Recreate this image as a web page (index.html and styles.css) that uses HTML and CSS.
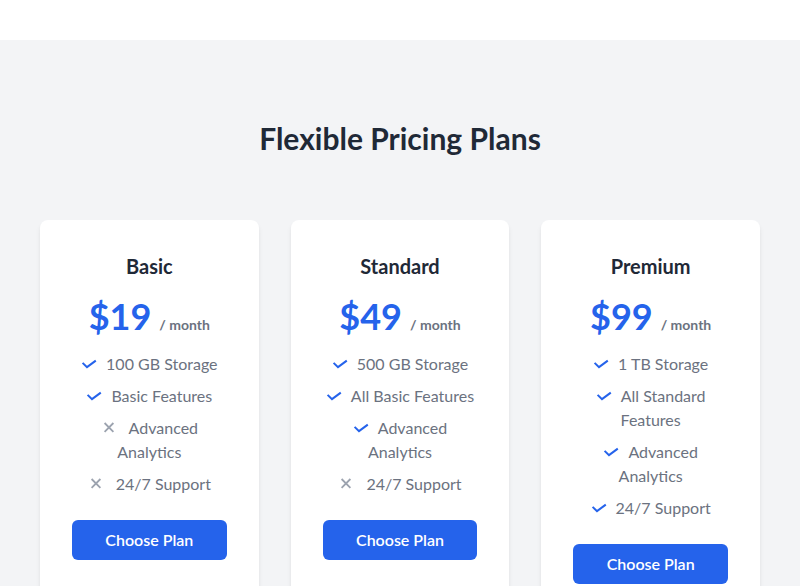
FILE: index.html
```html
<!DOCTYPE html>
<html lang="en">
<head>
<meta charset="utf-8">
<title>Pricing</title>
<link rel="stylesheet" href="styles.css">
</head>
<body>
<header class="topbar"></header>
<section class="pricing">
  <h2 class="pricing-title">Flexible Pricing Plans</h2>
  <div class="plans">
    <div class="card">
      <h3 class="plan-name">Basic</h3>
      <div class="price"><span class="amount">$19</span><span class="period">/ month</span></div>
      <ul class="features">
        <li><svg class="icon check" viewBox="0 0 16 16"><path d="M1.6 4.9L6 9.1L14.8 2.6"/></svg>100 GB Storage</li>
        <li><svg class="icon check" viewBox="0 0 16 16"><path d="M1.6 4.9L6 9.1L14.8 2.6"/></svg>Basic Features</li>
        <li><svg class="icon cross" viewBox="0 0 16 16"><path d="M3.6 1L12.4 9.8M12.4 1L3.6 9.8"/></svg>Advanced Analytics</li>
        <li><svg class="icon cross" viewBox="0 0 16 16"><path d="M3.6 1L12.4 9.8M12.4 1L3.6 9.8"/></svg>24/7 Support</li>
      </ul>
      <button class="choose">Choose Plan</button>
    </div>
    <div class="card">
      <h3 class="plan-name">Standard</h3>
      <div class="price"><span class="amount">$49</span><span class="period">/ month</span></div>
      <ul class="features">
        <li><svg class="icon check" viewBox="0 0 16 16"><path d="M1.6 4.9L6 9.1L14.8 2.6"/></svg>500 GB Storage</li>
        <li><svg class="icon check" viewBox="0 0 16 16"><path d="M1.6 4.9L6 9.1L14.8 2.6"/></svg>All Basic Features</li>
        <li><svg class="icon check" viewBox="0 0 16 16"><path d="M1.6 4.9L6 9.1L14.8 2.6"/></svg>Advanced Analytics</li>
        <li><svg class="icon cross" viewBox="0 0 16 16"><path d="M3.6 1L12.4 9.8M12.4 1L3.6 9.8"/></svg>24/7 Support</li>
      </ul>
      <button class="choose">Choose Plan</button>
    </div>
    <div class="card">
      <h3 class="plan-name">Premium</h3>
      <div class="price"><span class="amount">$99</span><span class="period">/ month</span></div>
      <ul class="features">
        <li><svg class="icon check" viewBox="0 0 16 16"><path d="M1.6 4.9L6 9.1L14.8 2.6"/></svg>1 TB Storage</li>
        <li><svg class="icon check" viewBox="0 0 16 16"><path d="M1.6 4.9L6 9.1L14.8 2.6"/></svg>All Standard Features</li>
        <li><svg class="icon check" viewBox="0 0 16 16"><path d="M1.6 4.9L6 9.1L14.8 2.6"/></svg>Advanced Analytics</li>
        <li><svg class="icon check" viewBox="0 0 16 16"><path d="M1.6 4.9L6 9.1L14.8 2.6"/></svg>24/7 Support</li>
      </ul>
      <button class="choose">Choose Plan</button>
    </div>
  </div>
</section>
</body>
</html>
```

FILE: styles.css
```css
* { box-sizing: border-box; }
html, body { margin: 0; padding: 0; }
body {
  font-family: Lato, "Liberation Sans", sans-serif;
  background: #f3f4f6;
  color: #1f2937;
}
.topbar {
  height: 40px;
  background: #ffffff;
}
.pricing {
  background: #f3f4f6;
  padding: 80px 40px 40px;
}
.pricing-title {
  margin: 0 0 64px;
  text-align: center;
  font-size: 30px;
  line-height: 36px;
  font-weight: 700;
  color: #1f2937;
}
.plans {
  display: grid;
  grid-template-columns: repeat(3, 1fr);
  gap: 32px;
}
.card {
  background: #ffffff;
  border-radius: 8px;
  box-shadow: 0 4px 6px -1px rgba(0,0,0,0.08), 0 2px 4px -1px rgba(0,0,0,0.05);
  padding: 32px;
  text-align: center;
}
.plan-name {
  margin: 0;
  font-size: 20px;
  line-height: 28px;
  font-weight: 700;
  color: #1f2937;
}
.price {
  margin-top: 16px;
  height: 40px;
  display: flex;
  justify-content: center;
  align-items: baseline;
  line-height: 40px;
}
.amount {
  font-size: 36px;
  font-weight: 700;
  color: #2563eb;
}
.period {
  margin-left: 8px;
  font-size: 14px;
  line-height: 20px;
  font-weight: 700;
  color: #6b7280;
}
.features {
  list-style: none;
  margin: 16px 0 0;
  padding: 0;
  display: flex;
  flex-direction: column;
  gap: 8px;
  font-size: 16px;
  line-height: 24px;
  color: #6b7280;
}
.icon {
  width: 16px;
  height: 16px;
  vertical-align: middle;
  fill: none;
  stroke-width: 2;
}
.check {
  stroke: #2563eb;
  margin-right: 9px;
}
.cross {
  stroke: #9ca3af;
  stroke-width: 1.8;
  margin-right: 12px;
}
.choose {
  display: block;
  width: 100%;
  margin-top: 24px;
  padding: 8px 16px;
  border: 0;
  border-radius: 6px;
  background: #2563eb;
  color: #ffffff;
  font-family: Lato, "Liberation Sans", sans-serif;
  font-size: 16px;
  line-height: 24px;
  font-weight: 600;
}
```
